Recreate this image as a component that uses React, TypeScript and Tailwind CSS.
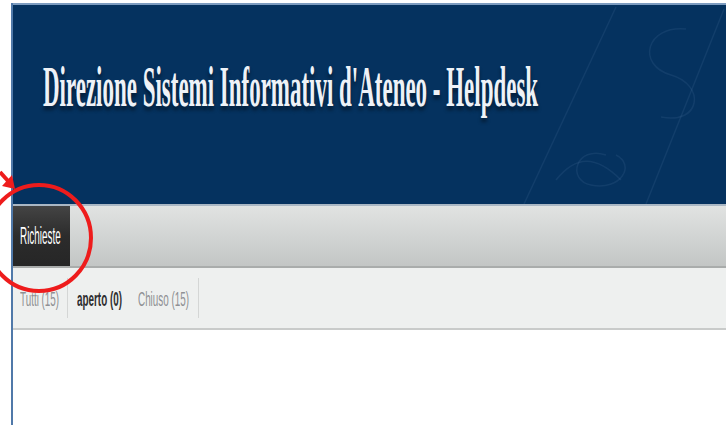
import { ReactNode } from "react";

interface Filter {
  label: string;
  active?: boolean;
  width: string;
}

const filters: Filter[] = [
  { label: "Tutti (15)", width: "w-[48px]" },
  { label: "aperto (0)", active: true, width: "w-[61px]" },
  { label: "Chiuso (15)", width: "w-[70px]" },
];

// narrow text: laid out at full size, squeezed sideways
function Narrow({ children, className }: { children: ReactNode; className: string }) {
  return <span className={"inline-block origin-left whitespace-nowrap " + className}>{children}</span>;
}

function HeaderOrnament() {
  return (
    <svg className="absolute right-0 top-0 h-full w-[230px]" viewBox="0 0 230 199" fill="none">
      <g stroke="#4f73a0" strokeOpacity="0.18" strokeWidth="1.5">
        <path d="M120 2 L28 199" />
        <path d="M228 4 L150 199" />
        <path d="M190 24 C150 20 140 60 175 70 C210 80 205 120 165 112" />
        <path d="M110 150 C80 140 70 175 95 180 C125 186 140 160 120 150" />
        <path d="M60 175 C80 150 100 150 125 175" />
      </g>
    </svg>
  );
}

function App() {
  return (
    <div className="relative h-[425px] w-[726px] overflow-hidden bg-white font-['Liberation_Sans',Arial,sans-serif]">
      <div className="ml-[11px] mt-[3px] h-[422px] border-l-2 border-[#5079a9]">
        {/* banner */}
        <div className="relative h-[201px] overflow-hidden border-t-2 border-[#7d9cc0] bg-[#05325f]">
          <HeaderOrnament />
          <div className="pl-[30px] pt-[50px]">
            <Narrow className="scale-x-[0.41] font-['Liberation_Serif',serif] text-[56px] font-bold leading-[64px] text-[#eef2f7] [text-shadow:0_4px_6px_rgba(0,0,0,0.45)]">
              Direzione Sistemi Informativi d'Ateneo - Helpdesk
            </Narrow>
          </div>
        </div>

        {/* main menu */}
        <div className="flex h-[64px] border-t-2 border-[#aab7c4] border-b-2 border-b-[#a9acab] bg-gradient-to-b from-[#e1e3e2] to-[#c3c6c5]">
          <div className="flex w-[57px] items-center bg-gradient-to-b from-[#444444] via-[#2c2c2c] to-[#262626] pl-[7px]">
            <Narrow className="scale-x-[0.43] text-[23px] leading-none text-white">Richieste</Narrow>
          </div>
        </div>

        {/* status filters */}
        <div className="flex h-[62px] items-center border-b-2 border-[#c9cbca] bg-[#eef0ef] pl-[7px]">
          {filters.map((f, i) => (
            <div
              key={f.label}
              className={
                "flex h-[40px] items-center " +
                f.width +
                (i > 0 ? " pl-[9px]" : "") +
                (f.active ? "" : " border-r border-[#d4d6d5]")
              }
            >
              <Narrow
                className={
                  "scale-x-[0.47] text-[21px] leading-none " +
                  (f.active ? "font-bold text-[#2e2e2e]" : "text-[#8f9094]")
                }
              >
                {f.label}
              </Narrow>
            </div>
          ))}
        </div>
      </div>

      {/* red marker drawn over the menu */}
      <svg className="pointer-events-none absolute left-0 top-[166px] h-[135px] w-[110px]" viewBox="0 0 110 135" fill="none">
        <ellipse cx="39" cy="72" rx="52" ry="53" stroke="#ee1c1c" strokeWidth="4" />
        <path d="M0 6 L9 16" stroke="#ee1c1c" strokeWidth="4" />
        <path d="M2 20 L15 23 L12 9 Z" fill="#ee1c1c" />
      </svg>
    </div>
  );
}

export default App;
